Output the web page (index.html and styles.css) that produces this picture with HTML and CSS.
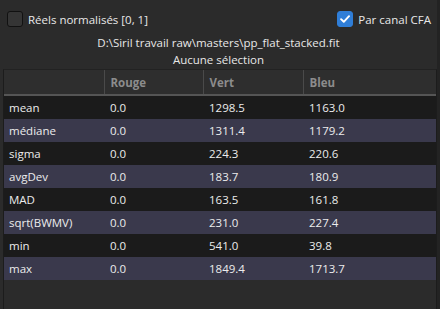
FILE: index.html
```html
<!DOCTYPE html>
<html>
<head>
<meta charset="utf-8">
<link rel="stylesheet" href="styles.css">
</head>
<body>
<div class="win">
  <div class="top">
    <label class="chk"><span class="box"></span><span>Réels normalisés [0, 1]</span></label>
    <label class="chk"><span class="box on"><svg viewBox="0 0 16 16" width="16" height="16"><path d="M3.5 8.2 L6.6 11.2 L12.6 4.8" fill="none" stroke="#fff" stroke-width="2.2" stroke-linecap="round" stroke-linejoin="round"/></svg></span><span>Par canal CFA</span></label>
  </div>
  <div class="line path">D:\Siril travail raw\masters\pp_flat_stacked.fit</div>
  <div class="line sel">Aucune sélection</div>
  <div class="panel">
    <table class="stats">
      <colgroup><col class="c0"><col class="c1"><col class="c2"><col class="c3"></colgroup>
      <thead><tr><th></th><th>Rouge</th><th>Vert</th><th>Bleu</th></tr></thead>
      <tbody>
        <tr><td>mean</td><td>0.0</td><td>1298.5</td><td>1163.0</td></tr>
        <tr><td>médiane</td><td>0.0</td><td>1311.4</td><td>1179.2</td></tr>
        <tr><td>sigma</td><td>0.0</td><td>224.3</td><td>220.6</td></tr>
        <tr><td>avgDev</td><td>0.0</td><td>183.7</td><td>180.9</td></tr>
        <tr><td>MAD</td><td>0.0</td><td>163.5</td><td>161.8</td></tr>
        <tr><td>sqrt(BWMV)</td><td>0.0</td><td>231.0</td><td>227.4</td></tr>
        <tr><td>min</td><td>0.0</td><td>541.0</td><td>39.8</td></tr>
        <tr><td>max</td><td>0.0</td><td>1849.4</td><td>1713.7</td></tr>
      </tbody>
    </table>
  </div>
</div>
</body>
</html>
```
FILE: styles.css
```css
html, body { margin: 0; padding: 0; background: #2b2b2b; }
body { width: 440px; height: 309px; overflow: hidden; font-family: "Open Sans", "Noto Sans", sans-serif; font-size: 11.5px; color: #e8e8e8; }
.win { display: flex; flex-direction: column; height: 309px; box-sizing: border-box; border-right: 3px solid #232323; }
.top { display: flex; justify-content: space-between; align-items: center; padding: 11px 6px 0 7px; height: 16px; }
.chk { display: flex; align-items: center; gap: 5px; }
.box { width: 14px; height: 14px; border: 1px solid #111; border-radius: 3px; background: #353535; box-sizing: content-box; display: flex; align-items: center; justify-content: center; }
.box.on { background: #2f7ed8; border-color: #2f7ed8; }
.box svg { width: 14px; height: 14px; }
.line { text-align: center; height: 17px; line-height: 17px; }
.path { margin-top: 7px; }
.sel { margin-top: 0px; }
.panel { flex: 1; margin: 1px 0 0 3px; border-left: 1px solid #1c1c1c; border-right: 1px solid #1c1c1c; border-top: 1px solid #222; background: #2b2b2b; }
.stats { width: 100%; border-collapse: collapse; table-layout: fixed; }
.c0 { width: 100px; } .c1 { width: 99px; } .c2 { width: 100px; }
.stats th { height: 24px; background: #2e2e2e; color: #8c8c8c; font-weight: 700; text-align: left; padding: 0 0 0 6px; border-bottom: 2px solid #555; border-left: 1px solid #4a4a4a; }
.stats th:first-child { border-left: none; }
.stats td { height: 23px; padding: 0 0 0 5px; color: #ececec; }
.stats td + td { padding-left: 6px; }
.stats tbody tr:nth-child(odd) td { background: #1b1b1b; }
.stats tbody tr:nth-child(even) td { background: #3a394c; }
```
